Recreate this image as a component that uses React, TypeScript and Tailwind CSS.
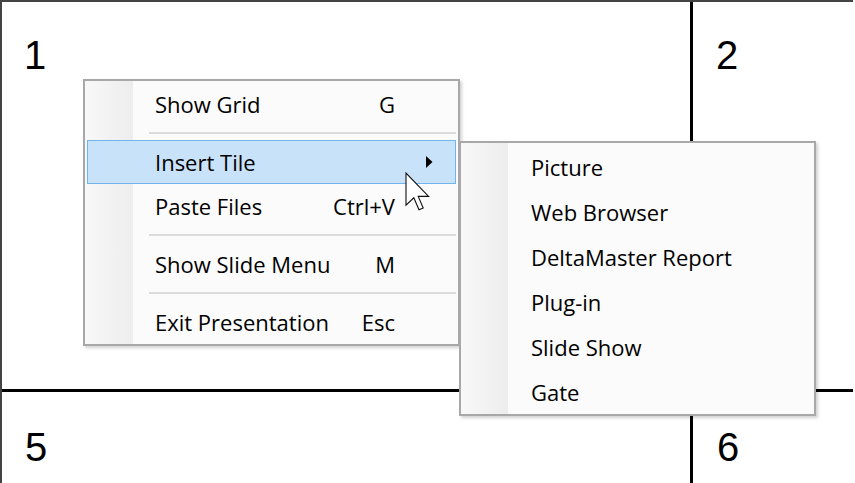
import React from "react";

type Item =
  | { kind: "item"; label: string; shortcut?: string; arrow?: boolean; active?: boolean }
  | { kind: "sep" };

const mainItems: Item[] = [
  { kind: "item", label: "Show Grid", shortcut: "G" },
  { kind: "sep" },
  { kind: "item", label: "Insert Tile", arrow: true, active: true },
  { kind: "item", label: "Paste Files", shortcut: "Ctrl+V" },
  { kind: "sep" },
  { kind: "item", label: "Show Slide Menu", shortcut: "M" },
  { kind: "sep" },
  { kind: "item", label: "Exit Presentation", shortcut: "Esc" },
];

const subItems = ["Picture", "Web Browser", "DeltaMaster Report", "Plug-in", "Slide Show", "Gate"];

function Arrow() {
  return (
    <svg width="7" height="12" viewBox="0 0 7 12" className="block">
      <path d="M0 0 L6.5 6 L0 12 Z" fill="#000" />
    </svg>
  );
}

function Cursor() {
  return (
    <svg width="25" height="40" viewBox="0 0 12.5 20" className="block">
      <path
        d="M0.5 0.5 L0.5 16.6 L4.4 12.9 L7 18.9 L9.1 18 L6.6 12.2 L11.8 12.2 Z"
        fill="#fff"
        stroke="#111"
        strokeWidth="0.55"
        strokeLinejoin="miter"
      />
    </svg>
  );
}

function Tile({ n, cls }: { n: string; cls: string }) {
  return (
    <div className={cls}>
      <span className="block font-['Liberation_Sans',Arial,sans-serif] text-[40px] leading-none text-black">
        {n}
      </span>
    </div>
  );
}

export default function App() {
  return (
    <div className="relative w-[855px] h-[483px] bg-white overflow-hidden font-['Open_Sans','Noto_Sans',sans-serif]">
      {/* grid of tiles */}
      <div className="w-[853px] h-[483px] border-t-2 border-l-2 border-[#444] grid grid-cols-[691px_1fr] grid-rows-[390px_1fr]">
        <Tile n="1" cls="border-r-[3px] border-b-[3px] border-black pl-[22px] pt-[33px]" />
        <Tile n="2" cls="border-b-[3px] border-black pl-[23px] pt-[33px]" />
        <Tile n="5" cls="border-r-[3px] border-black pl-[23px] pt-[35px]" />
        <Tile n="6" cls="pl-[24px] pt-[35px]" />
      </div>

      {/* main context menu */}
      <div className="absolute left-[83px] top-[79px] w-[377px] h-[267px] border-2 border-[#a8a8a8] bg-[#fbfbfb] shadow-[2px_2px_3px_rgba(0,0,0,0.18)]">
        <div className="absolute left-0 top-0 bottom-0 w-[48px] bg-gradient-to-r from-[#f8f8f8] to-[#ededed]" />
        <div className="relative flex flex-col pt-[1px] text-[22px] leading-none text-black">
          {mainItems.map((it, i) =>
            it.kind === "sep" ? (
              <div key={i} className="h-[14px] flex items-center pl-[64px] pr-[2px]">
                <div className="h-[2px] w-full bg-[#dcdcdc]" />
              </div>
            ) : (
              <div
                key={i}
                className={
                  "mx-[2px] h-[44px] border grid grid-cols-[1fr_auto_38px] items-center pl-[67px] pr-[22px] " +
                  (it.active ? "bg-[#c8e2fa] border-[#72b4ee]" : "border-transparent")
                }
              >
                <span className="whitespace-nowrap">{it.label}</span>
                <span className="whitespace-nowrap">{it.shortcut ?? ""}</span>
                <span className="flex justify-end">{it.arrow ? <Arrow /> : null}</span>
              </div>
            )
          )}
        </div>
      </div>

      {/* submenu */}
      <div className="absolute left-[459px] top-[141px] w-[357px] h-[275px] border-2 border-[#a8a8a8] bg-[#fbfbfb] shadow-[2px_2px_3px_rgba(0,0,0,0.18)]">
        <div className="absolute left-0 top-0 bottom-0 w-[47px] bg-gradient-to-r from-[#f8f8f8] to-[#ededed]" />
        <div className="relative flex flex-col pt-[1px] text-[22px] leading-none text-black">
          {subItems.map((s) => (
            <div key={s} className="mx-[2px] h-[45px] border border-transparent flex items-center pl-[67px]">
              <span className="whitespace-nowrap">{s}</span>
            </div>
          ))}
        </div>
      </div>

      {/* mouse pointer */}
      <div className="absolute left-[405px] top-[172px]">
        <Cursor />
      </div>
    </div>
  );
}
